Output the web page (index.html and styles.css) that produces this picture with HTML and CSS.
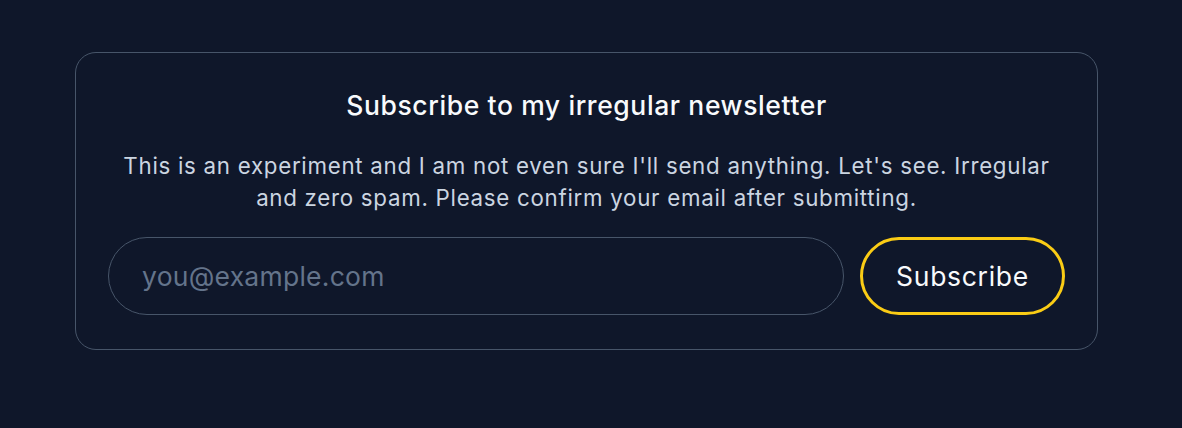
FILE: index.html
```html
<!DOCTYPE html>
<html>
  <head>
    <meta charset="utf-8">
    <title>Newsletter</title>
    <link rel="stylesheet" href="styles.css">
  </head>
  <body>
    <div class="page">
      <form class="newsletter" onsubmit="return false">
        <h2 class="newsletter-title">Subscribe to my irregular newsletter</h2>
        <p class="newsletter-text">This is an experiment and I am not even sure I'll send anything. Let's see. Irregular and zero spam. Please confirm your email after submitting.</p>
        <div class="newsletter-row">
          <input class="newsletter-input" type="email" placeholder="you@example.com">
          <button class="newsletter-button" type="submit">Subscribe</button>
        </div>
      </form>
    </div>
  </body>
</html>
```

FILE: styles.css
```css
html, body {
  background-color: #0f172a;
  margin: 0;
  padding: 0;
  height: 100%;
  overflow: hidden;
}
body {
  font-family: Inter, "Noto Sans", sans-serif;
  color: #f1f5f9;
}
.page {
  padding: 52px 84px 0 75px;
}
.newsletter {
  display: flex;
  flex-direction: column;
  align-items: stretch;
  border: 1px solid #475569;
  border-radius: 21px;
  padding: 32px 32px 34px;
}
.newsletter-title {
  margin: 0;
  font-size: 26.5px;
  font-weight: 500;
  line-height: 37px;
  letter-spacing: 0.6px;
  text-align: center;
  color: #f8fafc;
  padding-top: 2px;
}
.newsletter-text {
  margin: 26px 0 0;
  font-size: 22.3px;
  line-height: 32px;
  letter-spacing: 0.72px;
  text-align: center;
  color: #cbd5e1;
}
.newsletter-row {
  display: flex;
  gap: 16px;
  margin-top: 23px;
}
.newsletter-input {
  flex: 1;
  height: 78px;
  box-sizing: border-box;
  border: 1.5px solid #475569;
  border-radius: 999px;
  background: transparent;
  padding: 0 33px;
  font-family: inherit;
  font-size: 26.5px;
  letter-spacing: 0.25px;
  color: #f1f5f9;
  outline: none;
}
.newsletter-input::placeholder {
  color: #64748b;
}
.newsletter-button {
  width: 205px;
  height: 78px;
  box-sizing: border-box;
  border: 3px solid #facc15;
  border-radius: 999px;
  background: transparent;
  font-family: inherit;
  font-size: 26.5px;
  letter-spacing: 0.7px;
  color: #f8fafc;
  cursor: pointer;
}
```
